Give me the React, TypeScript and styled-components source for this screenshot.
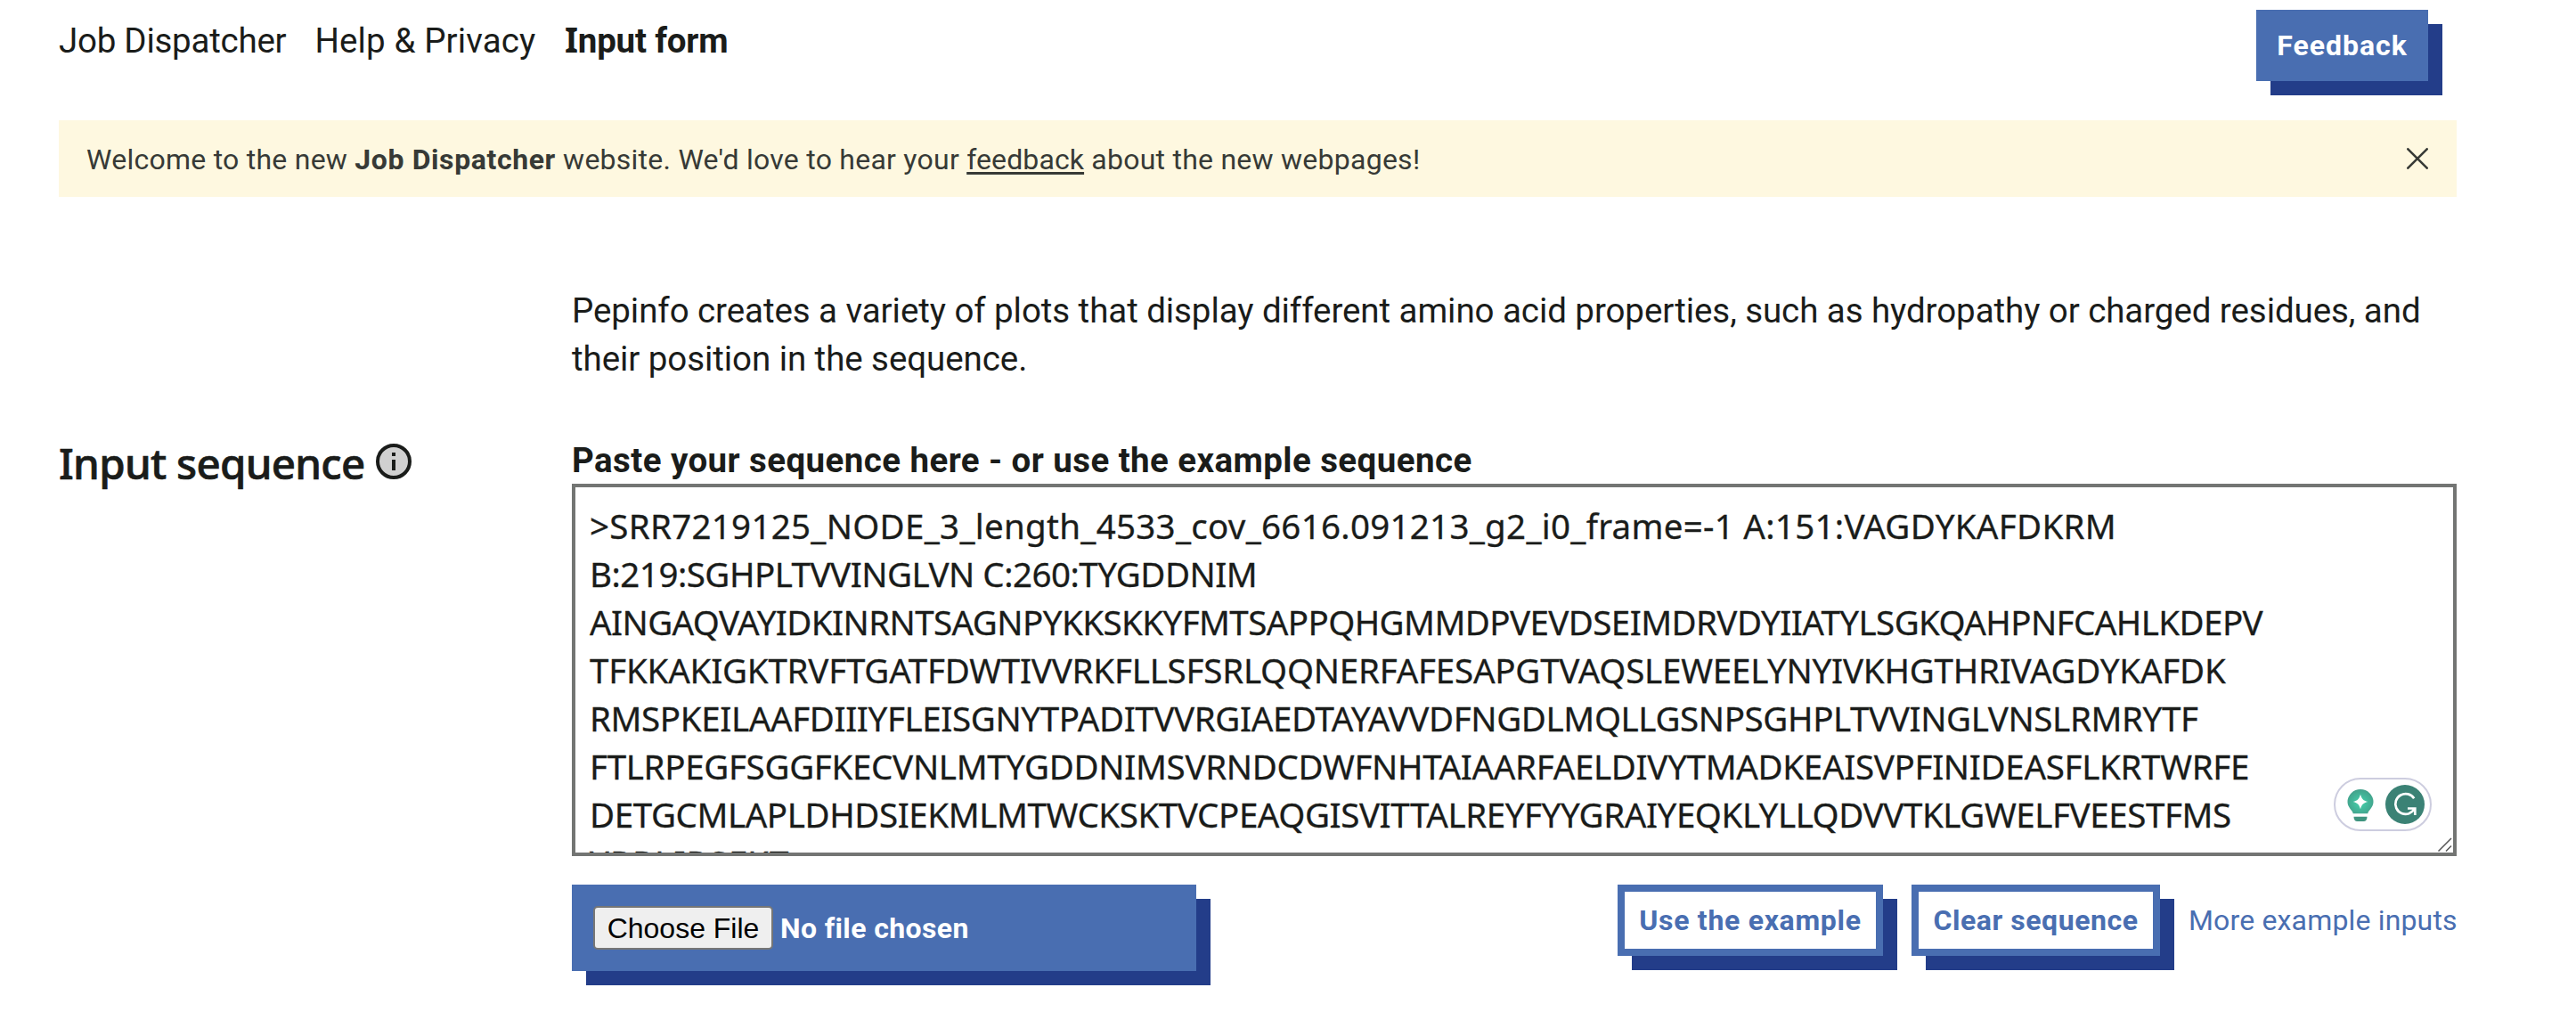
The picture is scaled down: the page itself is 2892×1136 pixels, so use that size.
import React from "react";
import styled, { createGlobalStyle } from "styled-components";

const BLUE = "#496eb1";
const NAVY = "#233d89";
const INK = "#1a1c1a";
const SANS = `Roboto, "Liberation Sans", sans-serif`;
const SERIFED = `"Noto Sans", "Liberation Sans", sans-serif`;

const GlobalStyle = createGlobalStyle`
  * { box-sizing: border-box; }
  body { margin: 0; background: #fff; color: ${INK}; font-family: ${SANS}; }
`;

const Page = styled.div`
  width: 2892px;
  height: 1136px;
  padding: 0 134px 0 66px;
  overflow: hidden;
  background: #fff;
`;

const Header = styled.header`
  display: flex;
  justify-content: space-between;
  align-items: flex-start;
  height: 135px;
  padding-right: 32px;
`;

const Nav = styled.nav`
  display: grid;
  grid-template-columns: 287.5px 280.5px auto;
  padding-top: 19px;
  font-size: 38.5px;
  line-height: 54px;
  white-space: nowrap;
`;

const NavLink = styled.a<{ $track: number; $current?: boolean }>`
  color: ${INK};
  font-weight: ${(p) => (p.$current ? 700 : 400)};
  letter-spacing: ${(p) => p.$track}px;
`;

const SlabInitial = styled.span`
  font-family: ${SERIFED};
  line-height: 1;
`;

const FeedbackButton = styled.button`
  width: 193px;
  height: 80px;
  margin-top: 11px;
  padding: 0;
  border: 0;
  background: ${BLUE};
  box-shadow: 16px 16px 0 ${NAVY};
  color: #fff;
  font: 700 32px/48px ${SANS};
  letter-spacing: 1px;
`;

const Banner = styled.section`
  display: flex;
  align-items: center;
  justify-content: space-between;
  height: 86px;
  padding: 0 32px 0 31px;
  background: #fef8e0;
  color: #373a36;
`;

const BannerText = styled.p`
  margin: 0;
  padding-top: 1px;
  font-size: 32px;
  line-height: 48px;
  letter-spacing: 0.25px;
  b { letter-spacing: 0.6px; }
  a {
    letter-spacing: 0.1px;
    text-decoration: underline;
    text-decoration-thickness: 3px;
    text-underline-offset: 3px;
    text-decoration-skip-ink: none;
  }
`;

const Form = styled.main`
  display: grid;
  grid-template-columns: 576px 2116px;
  padding-top: 101px;
`;

const Description = styled.p`
  grid-column: 2;
  margin: 0 0 61px;
  font-size: 38.5px;
  line-height: 54px;
  letter-spacing: -0.07px;
  white-space: nowrap;
`;

const SectionTitle = styled.h2`
  display: flex;
  align-items: flex-start;
  margin: 0;
  font: 500 47.5px/57px ${SERIFED};
  letter-spacing: -0.72px;
  -webkit-text-stroke: 0.7px ${INK};
  svg { margin: 7px 0 0 12px; }
`;

const FieldLabel = styled.label`
  display: block;
  font-size: 38.5px;
  font-weight: 700;
  line-height: 52px;
  letter-spacing: 0.42px;
`;

const SequenceBox = styled.div`
  position: relative;
  height: 418px;
  padding: 15.5px 16px 0;
  border: 4px solid #737573;
  overflow: hidden;
  font: 400 38.5px/54px ${SERIFED};
  -webkit-text-stroke: 0.3px ${INK};
  white-space: nowrap;
`;

const SequenceLine = styled.div<{ $track: number; $indent: number }>`
  letter-spacing: ${(p) => p.$track}px;
  padding-left: ${(p) => p.$indent}px;
`;

const AssistantPill = styled.div`
  position: absolute;
  right: 24px;
  bottom: 24px;
  width: 110px;
  height: 60px;
  svg { display: block; }
`;

const ResizeGrip = styled.svg`
  position: absolute;
  right: 0;
  bottom: 0;
`;

const Actions = styled.div`
  display: flex;
  justify-content: space-between;
  align-items: flex-start;
  padding-top: 32px;
`;

const FilePicker = styled.div`
  display: flex;
  align-items: center;
  gap: 8px;
  width: 701px;
  height: 97px;
  padding-left: 24px;
  background: ${BLUE};
  box-shadow: 16px 16px 0 ${NAVY};
  color: #fff;
  font-size: 32px;
  font-weight: 700;
  letter-spacing: 0.37px;
`;

const ChooseButton = styled.button`
  width: 202px;
  height: 49px;
  padding: 0;
  border: 2px solid #767676;
  border-radius: 5px;
  background: #efefef;
  color: #000;
  font: 400 32px/44px "Liberation Sans", Arial, sans-serif;
`;

const ActionGroup = styled.div`
  display: flex;
  align-items: center;
  gap: 32px;
`;

const OutlineButton = styled.button<{ $width: number; $track: number }>`
  width: ${(p) => p.$width}px;
  height: 80px;
  padding: 0;
  border: 8px solid ${BLUE};
  background: #fff;
  box-shadow: 16px 16px 0 ${NAVY};
  color: ${BLUE};
  font: 700 32px/48px ${SANS};
  letter-spacing: ${(p) => p.$track}px;
  white-space: nowrap;
`;

const MoreLink = styled.a`
  width: 301px;
  color: ${BLUE};
  font-size: 32px;
  line-height: 48px;
  letter-spacing: 0.16px;
  white-space: nowrap;
`;

const SEQUENCE = [
  { text: ">SRR7219125_NODE_3_length_4533_cov_6616.091213_g2_i0_frame=-1 A:151:VAGDYKAFDKRM", track: 0.285, indent: 0 },
  { text: "B:219:SGHPLTVVINGLVN C:260:TYGDDNIM", track: -0.5, indent: 0 },
  { text: "AINGAQVAYIDKINRNTSAGNPYKKSKKYFMTSAPPQHGMMDPVEVDSEIMDRVDYIIATYLSGKQAHPNFCAHLKDEPV", track: -0.585, indent: 0 },
  { text: "TFKKAKIGKTRVFTGATFDWTIVVRKFLLSFSRLQQNERFAFESAPGTVAQSLEWEELYNYIVKHGTHRIVAGDYKAFDK", track: -0.224, indent: 0 },
  { text: "RMSPKEILAAFDIIIYFLEISGNYTPADITVVRGIAEDTAYAVVDFNGDLMQLLGSNPSGHPLTVVINGLVNSLRMRYTF", track: -0.38, indent: 0 },
  { text: "FTLRPEGFSGGFKECVNLMTYGDDNIMSVRNDCDWFNHTAIAARFAELDIVYTMADKEAISVPFINIDEASFLKRTWRFE", track: -0.324, indent: 0 },
  { text: "DETGCMLAPLDHDSIEKMLMTWCKSKTVCPEAQGISVITTALREYFYYGRAIYEQKLYLLQDVVTKLGWELFVEESTFMS", track: -0.422, indent: 0 },
  { text: "YRRLIRSFKT", track: 1.13, indent: 0 },
];

const CloseIcon = () => (
  <svg width="24" height="24" viewBox="0 0 24 24" fill="none" stroke="#373a36" strokeWidth="2.6" strokeLinecap="round">
    <path d="M1.3 1.3 22.7 22.7M22.7 1.3 1.3 22.7" />
  </svg>
);

const InfoIcon = () => (
  <svg width="40" height="40" viewBox="0 0 40 40">
    <circle cx="20" cy="20" r="18" fill="#d0d0d0" stroke={INK} strokeWidth="4" />
    <path d="M18 10h4v4h-4zM18 18h4v12h-4z" fill={INK} />
  </svg>
);

const Assistant = () => (
  <AssistantPill>
    <svg width="110" height="60" viewBox="0 0 110 60">
      <defs>
        <radialGradient id="bulb" cx="0.5" cy="0.55" r="0.55">
          <stop offset="0.3" stopColor="#43c3a2" />
          <stop offset="1" stopColor="#43a18b" />
        </radialGradient>
      </defs>
      <rect x="1" y="1" width="108" height="58" rx="29" fill="#fff" stroke="#cdcddf" strokeWidth="2" />
      <path d="M21.7 40.3c0-3.4-6.2-6.4-6.2-13a14.5 14.3 0 0 1 29 0c0 6.6-6.2 9.6-6.2 13z" fill="url(#bulb)" />
      <path d="M22.5 43.7h15c0 3.5-1.5 5.3-4 5.3h-7c-2.5 0-4-1.8-4-5.3z" fill="#3f947f" />
      <path d="M30 18.7c1.5 5.3 3 6.8 8.2 8.3-5.2 1.5-6.700 3-8.200 8.300-1.500-5.300-3-6.800-8.200-8.300 5.200-1.500 6.700-3 8.200-8.300z" fill="#fff" />
      <circle cx="80" cy="30" r="22" fill="#3b8275" />
      <path d="M90.2 23.2A11.4 11.4 0 1 0 84.5 40.2Q87.5 39 91 35.2M83 34.5h8.300v7.600" fill="none" stroke="#fff" strokeWidth="2.7" />
    </svg>
  </AssistantPill>
);

export default function App() {
  return (
    <Page>
      <GlobalStyle />
      <Header>
        <Nav>
          <NavLink $track={-0.25}>Job Dispatcher</NavLink>
          <NavLink $track={0.11}>Help &amp; Privacy</NavLink>
          <NavLink $track={-0.2} $current>
            <SlabInitial>I</SlabInitial>nput form
          </NavLink>
        </Nav>
        <FeedbackButton>Feedback</FeedbackButton>
      </Header>

      <Banner>
        <BannerText>
          Welcome to the new <b>Job Dispatcher</b> website. We'd love to hear your <a>feedback</a> about the new webpages!
        </BannerText>
        <CloseIcon />
      </Banner>

      <Form>
        <Description>
          Pepinfo creates a variety of plots that display different amino acid properties, such as hydropathy or charged residues, and
          <br />
          their position in the sequence.
        </Description>

        <SectionTitle>
          Input sequence
          <InfoIcon />
        </SectionTitle>

        <div>
          <FieldLabel>Paste your sequence here - or use the example sequence</FieldLabel>
          <SequenceBox>
            {SEQUENCE.map((line) => (
              <SequenceLine key={line.text} $track={line.track} $indent={line.indent}>
                {line.text}
              </SequenceLine>
            ))}
            <Assistant />
            <ResizeGrip width="20" height="18" viewBox="0 0 20 18" stroke="#555" strokeWidth="1.5" fill="none">
              <path d="M3.5 16.5 18 2M12 16.5 18 10.5" />
            </ResizeGrip>
          </SequenceBox>
          <Actions>
            <FilePicker>
              <ChooseButton>Choose File</ChooseButton>
              No file chosen
            </FilePicker>
            <ActionGroup>
              <OutlineButton $width={298} $track={0.7}>Use the example</OutlineButton>
              <OutlineButton $width={279} $track={0.55}>Clear sequence</OutlineButton>
              <MoreLink>More example inputs</MoreLink>
            </ActionGroup>
          </Actions>
        </div>
      </Form>
    </Page>
  );
}
